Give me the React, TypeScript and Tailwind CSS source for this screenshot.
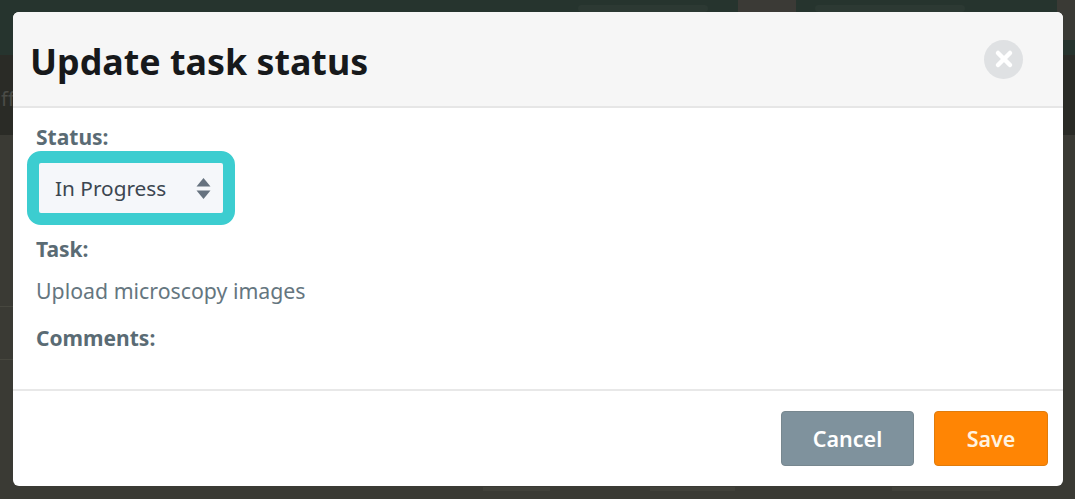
import { X } from 'lucide-react'

const labelClass = "text-[21px] leading-[26px] font-bold text-[#5a6b74]"

export default function App() {
  return (
    <div className="relative h-[499px] w-[1075px] overflow-hidden bg-[#3a3a34] pt-[12px] pl-[13px] font-['Noto_Sans',sans-serif]">
      {/* dimmed page behind the modal */}
      <div className="absolute inset-x-0 top-0 h-[55px] bg-[#26342e]" />
      <div className="absolute inset-x-0 top-[55px] h-[80px] bg-[#2a2b26]" />
      <div className="absolute top-0 right-0 h-[40px] w-[18px] bg-[#3a3a35]" />
      <div className="absolute top-0 left-[738px] h-[12px] w-[58px] bg-[#3b3a36]" />
      <div className="absolute top-[5px] left-[578px] h-[7px] w-[130px] rounded-sm bg-[#2c3933]" />
      <div className="absolute top-[5px] left-[815px] h-[7px] w-[150px] rounded-sm bg-[#2c3933]" />
      <span className="absolute top-[84px] left-[1px] text-[20px] text-[#4b4c47]">ff</span>
      <div className="absolute top-[306px] left-0 h-px w-[13px] bg-[#47473f]" />
      <div className="absolute top-[359px] left-0 h-px w-[13px] bg-[#47473f]" />
      <div className="absolute top-[487px] left-[483px] h-[4px] w-[67px] bg-[#41413a]" />
      <div className="absolute top-[487px] left-[650px] h-[4px] w-[85px] bg-[#41413a]" />
      <div className="absolute top-[487px] left-[892px] h-[4px] w-[108px] bg-[#41413a]" />

      <div className="relative flex h-[474px] w-[1050px] flex-col overflow-hidden rounded-[6px] bg-white">
        <div className="flex h-[96px] shrink-0 items-center justify-between border-b-2 border-[#e6e6e6] bg-[#f6f6f6] pt-[5px] pl-[18px] pr-[40px]">
          <h1 className="-ml-[1px] text-[35.8px] leading-none font-bold text-[#17191b]">Update task status</h1>
          <div className="-mt-[5px] flex h-[39px] w-[39px] items-center justify-center rounded-full bg-[#dfe1e3]">
            <X className="h-[24px] w-[24px] text-white" strokeWidth={4.5} />
          </div>
        </div>

        <div className="flex h-[283px] shrink-0 flex-col items-start border-b-2 border-[#e8e8e8] pt-[16px] pl-[23px]">
          <label className={labelClass}>Status:</label>
          <div className="mt-[1px] -ml-[9px] flex h-[74px] w-[208px] items-center justify-between rounded-[14px] border-[12px] border-[#3ccdd0] bg-[#f5f7fa] pr-[12px] pl-[16px]">
            <span className="pt-[2px] text-[20.8px] text-[#3c4650]">In Progress</span>
            <svg width="15" height="21" viewBox="0 0 15 21" className="fill-[#66727f]">
              <path d="M7.5 0 14.5 8.5H.5Z" />
              <path d="M7.5 21 14.5 12.5H.5Z" />
            </svg>
          </div>
          <label className={`mt-[11px] ${labelClass}`}>Task:</label>
          <p className="mt-[16px] text-[21.3px] leading-[26px] text-[#65767f]">Upload microscopy images</p>
          <label className={`mt-[21px] ${labelClass}`}>Comments:</label>
        </div>

        <div className="flex flex-1 items-center justify-end gap-[20px] pr-[15px] pb-[1px]">
          <button className="h-[55px] w-[133px] rounded-[4px] border border-[#77878f] bg-[#7f929d] pt-[3px] text-[21.5px] font-semibold text-white">
            Cancel
          </button>
          <button className="h-[55px] w-[114px] rounded-[4px] border border-[#e07c0c] bg-[#ff8504] pt-[3px] text-[21.5px] font-semibold text-[#fff3e0]">
            Save
          </button>
        </div>
      </div>
    </div>
  )
}
